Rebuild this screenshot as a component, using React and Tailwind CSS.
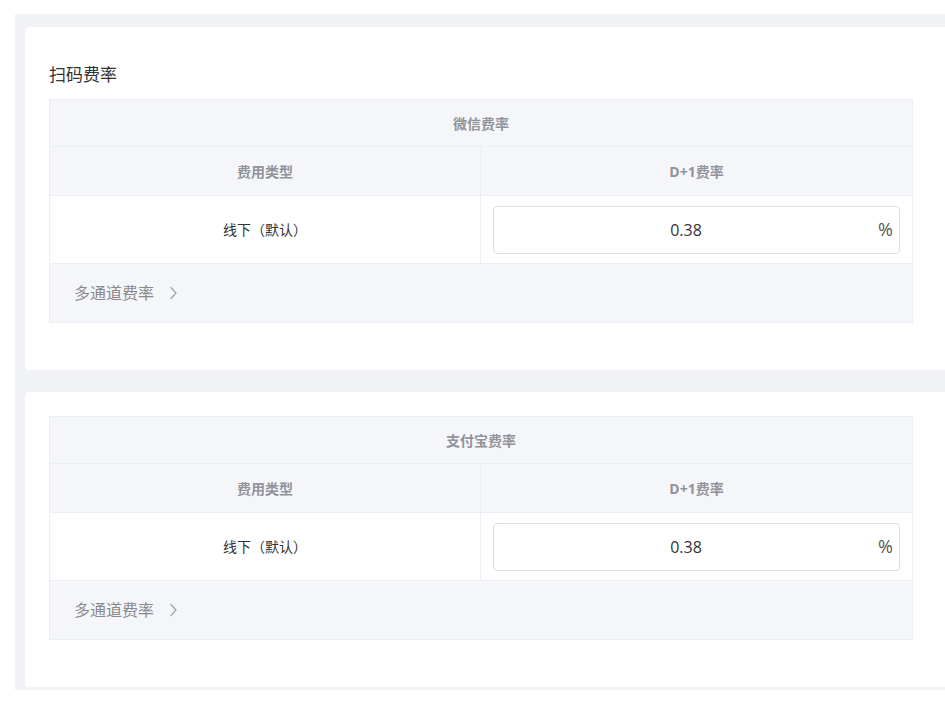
import React from 'react';

const font = { fontFamily: '"Open Sans", "Noto Sans CJK SC", sans-serif' };

function Chevron() {
  return (
    <svg width="9" height="14" viewBox="0 0 9 14" fill="none" className="ml-[15px]">
      <polyline points="2,1.5 7,7 2,12.5" stroke="#a0a3aa" strokeWidth="1.2" strokeLinecap="round" strokeLinejoin="round" />
    </svg>
  );
}

function RateTable({ channel }) {
  return (
    <div className="w-[864px] border border-[#ebeef5]">
      <div className="flex h-[47px] items-center justify-center border-b border-[#ebeef5] bg-[#f5f6fa] text-[14px] font-bold text-[#909399]">
        {channel}
      </div>
      <div className="grid h-[49px] grid-cols-2 border-b border-[#ebeef5] bg-[#f5f6fa] text-[14px] font-bold text-[#909399]">
        <div className="flex items-center justify-center border-r border-[#ebeef5]">费用类型</div>
        <div className="flex items-center justify-center">D+1费率</div>
      </div>
      <div className="grid h-[68px] grid-cols-2 border-b border-[#ebeef5] bg-white">
        <div className="flex items-center justify-center border-r border-[#ebeef5] text-[14px] text-[#333]">
          线下（默认）
        </div>
        <div className="flex items-center px-3">
          <div className="flex h-[48px] w-full items-center rounded-[4px] border border-[#dcdfe6] bg-white">
            <input
              defaultValue="0.38"
              className="h-full min-w-0 flex-1 bg-transparent text-center text-[16px] text-[#333] outline-none"
              style={font}
            />
            <span className="pr-[6px] text-[18px] text-[#555]">%</span>
          </div>
        </div>
      </div>
      <div className="flex h-[58px] items-center bg-[#f5f6fa] pl-[24px] text-[16px] text-[#8a8a8a]">
        多通道费率
        <Chevron />
      </div>
    </div>
  );
}

export default function App() {
  return (
    <div className="min-h-[704px] overflow-hidden bg-white pl-[15px] pt-[14px]" style={font}>
      <div className="flex flex-col gap-[22px] bg-[#f0f2f5] pb-[3px] pl-[10px] pt-[13px]">
        <div className="rounded-l-[4px] bg-white pb-[47px] pl-6 pt-[37px]">
          <div className="mb-[13px] text-[17px] leading-[22px] text-[#333]">扫码费率</div>
          <RateTable channel="微信费率" />
        </div>
        <div className="rounded-l-[4px] bg-white pb-[47px] pl-6 pt-6">
          <RateTable channel="支付宝费率" />
        </div>
      </div>
    </div>
  );
}
